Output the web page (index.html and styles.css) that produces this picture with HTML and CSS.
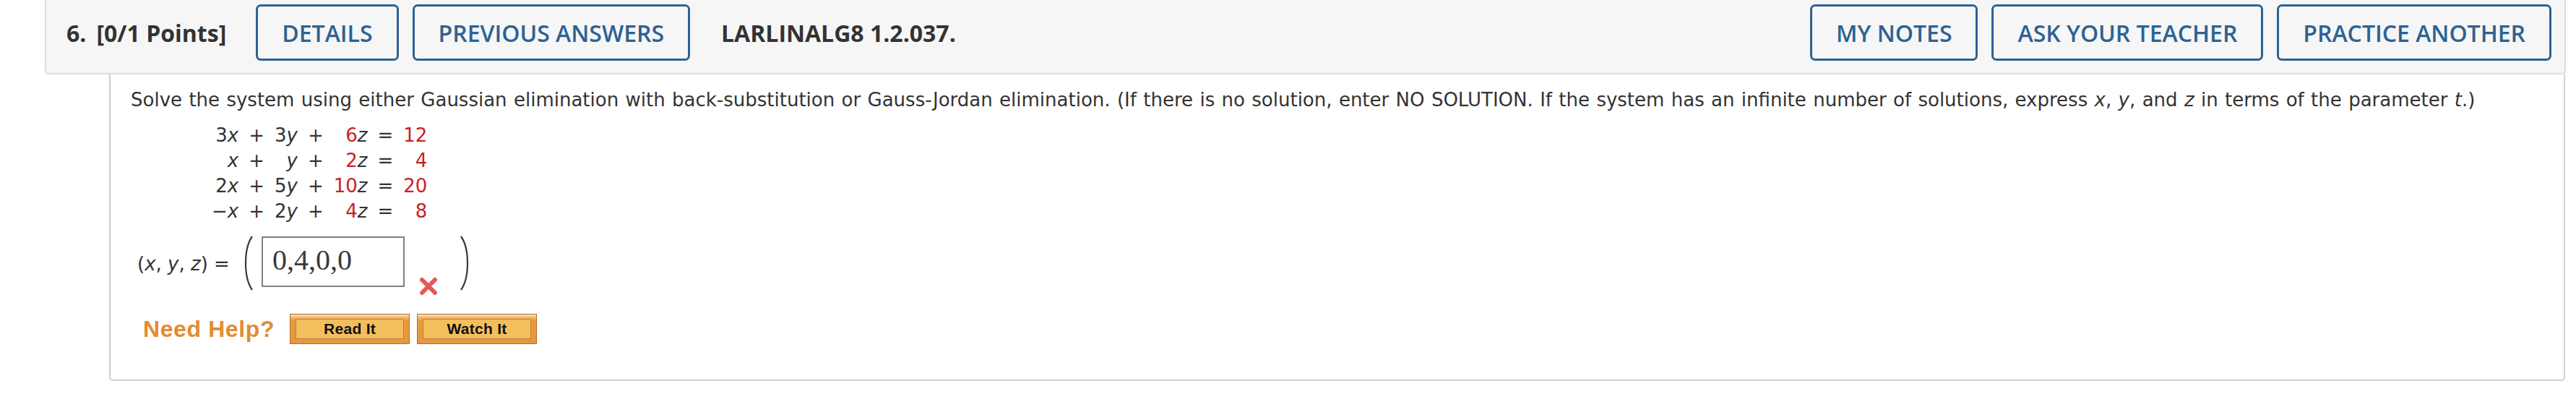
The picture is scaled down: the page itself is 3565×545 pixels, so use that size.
FILE: index.html
```html
<!DOCTYPE html>
<html lang="en">
<head>
<meta charset="utf-8">
<title>Question 6</title>
<link rel="stylesheet" href="styles.css">
</head>
<body>
<div class="page">
  <div class="qhead">
    <div class="qtitle"><span class="qnum">6.</span><span>[0/1 Points]</span></div>
    <button class="hbtn">DETAILS</button>
    <button class="hbtn">PREVIOUS ANSWERS</button>
    <div class="qcode">LARLINALG8 1.2.037.</div>
    <div class="spacer"></div>
    <button class="hbtn hbtn-notes">MY NOTES</button>
    <button class="hbtn">ASK YOUR TEACHER</button>
    <button class="hbtn">PRACTICE ANOTHER</button>
  </div>
  <div class="qbody">
    <p class="prompt">Solve the system using either Gaussian elimination with back-substitution or Gauss-Jordan elimination. (If there is no solution, enter NO SOLUTION. If the system has an infinite number of solutions, express <i>x</i>, <i>y</i>, and <i>z</i> in terms of the parameter <i>t</i>.)</p>
    <div class="eqs">
      <span>3<i>x</i></span><span>+</span><span>3<i>y</i></span><span>+</span><span><b>6</b><i>z</i></span><span>=</span><span><b>12</b></span>
      <span><i>x</i></span><span>+</span><span><i>y</i></span><span>+</span><span><b>2</b><i>z</i></span><span>=</span><span><b>4</b></span>
      <span>2<i>x</i></span><span>+</span><span>5<i>y</i></span><span>+</span><span><b>10</b><i>z</i></span><span>=</span><span><b>20</b></span>
      <span>&minus;<i>x</i></span><span>+</span><span>2<i>y</i></span><span>+</span><span><b>4</b><i>z</i></span><span>=</span><span><b>8</b></span>
    </div>
    <div class="answer">
      <span class="lhs">(<i>x</i>, <i>y</i>, <i>z</i>) =</span>
      <svg class="paren" width="18" height="76" viewBox="0 0 18 76"><path d="M16 1 C 4 18, 4 58, 16 75" fill="none" stroke="#3a3a3a" stroke-width="2.2"/></svg>
      <div class="inbox">0,4,0,0</div>
      <svg class="wrong" width="26" height="26" viewBox="0 0 26 26"><path d="M4 4 L22 22 M22 4 L4 22" stroke="#e25a5a" stroke-width="6" stroke-linecap="round"/></svg>
      <svg class="paren" width="18" height="76" viewBox="0 0 18 76"><path d="M2 1 C 14 18, 14 58, 2 75" fill="none" stroke="#3a3a3a" stroke-width="2.2"/></svg>
    </div>
    <div class="help">
      <span class="needhelp">Need Help?</span>
      <span class="hlp"><span class="hlp-in">Read It</span></span>
      <span class="hlp"><span class="hlp-in">Watch It</span></span>
    </div>
  </div>
</div>
</body>
</html>
```
FILE: styles.css
```css
html, body {
  margin: 0;
  padding: 0;
  background: #ffffff;
}

.page {
  margin-left: 62px;
  width: 3489px;
}

.qhead {
  box-sizing: border-box;
  display: flex;
  align-items: center;
  background: #f6f6f6;
  border: 2px solid #dddddd;
  border-top: none;
  border-radius: 0 0 5px 5px;
  padding: 6px 18px 17px 28px;
  font-family: "Open Sans", "Liberation Sans", sans-serif;
  font-size: 32px;
  color: #333333;
}

.qtitle {
  font-weight: 700;
  margin-right: 41px;
  white-space: nowrap;
}

.qnum {
  margin-right: 14px;
}

.qcode {
  font-weight: 700;
  margin-left: 43px;
  white-space: nowrap;
}

.spacer {
  flex: 1;
}

.hbtn {
  box-sizing: border-box;
  height: 78px;
  padding: 0 33px;
  margin-left: 19px;
  background: transparent;
  border: 3px solid #2d6294;
  border-radius: 7px;
  color: #2d6294;
  font-family: "Open Sans", "Liberation Sans", sans-serif;
  font-weight: 600;
  font-size: 32px;
  white-space: nowrap;
}

.qtitle + .hbtn {
  margin-left: 0;
}

.hbtn-notes {
  min-width: 229px;
}

.qbody {
  box-sizing: border-box;
  margin-left: 89px;
  width: 3399px;
  border: 2px solid #cfcfcf;
  border-top: none;
  border-radius: 0 0 5px 5px;
  padding: 20px 20px 49px 28px;
  font-family: "DejaVu Sans", Verdana, sans-serif;
  font-size: 26px;
  color: #333333;
}

.prompt {
  margin: 0;
  line-height: 30px;
  white-space: nowrap;
  word-spacing: 1.1px;
}

.eqs {
  display: inline-grid;
  grid-template-columns: repeat(7, auto);
  column-gap: 14px;
  justify-items: end;
  line-height: 35px;
  margin: 17px 0 0 112px;
}

.eqs b {
  font-weight: normal;
  color: #cc2121;
}

.answer {
  display: flex;
  align-items: flex-start;
  margin-top: 16px;
  height: 76px;
}

.lhs {
  box-sizing: border-box;
  width: 132px;
  margin: 1px 11px 0 9px;
  line-height: 76px;
  white-space: nowrap;
}

.paren {
  display: block;
}

.inbox {
  box-sizing: border-box;
  width: 198px;
  height: 70px;
  margin: 1px 0 0 11px;
  border: 2px solid #808080;
  padding-left: 13px;
  font-family: "Liberation Serif", "Times New Roman", serif;
  font-size: 40px;
  line-height: 62px;
  color: #3a3a3a;
}

.wrong {
  display: block;
  margin: 57px 30px 0 20px;
}

.help {
  display: flex;
  align-items: center;
  margin-top: 32px;
  margin-left: 17px;
}

.needhelp {
  font-family: "Liberation Sans", Arial, sans-serif;
  font-weight: 700;
  font-size: 32px;
  letter-spacing: 0.6px;
  color: #e38b30;
  margin-right: 21px;
}

.hlp {
  box-sizing: border-box;
  display: flex;
  width: 166px;
  height: 42px;
  padding: 6px 7px 6px 7px;
  margin-right: 10px;
  border: 1px solid #a8712f;
  background: linear-gradient(#fbe3bd 0px, #f0b062 5px, #e99a3e 9px, #e8973b 100%);
}

.hlp-in {
  box-sizing: border-box;
  flex: 1;
  display: flex;
  align-items: center;
  justify-content: center;
  border: 1px solid #b7813f;
  background: #f3bf5d;
  font-family: "Liberation Sans", Arial, sans-serif;
  font-weight: 700;
  font-size: 21px;
  letter-spacing: 0.3px;
  color: #111111;
}
```
